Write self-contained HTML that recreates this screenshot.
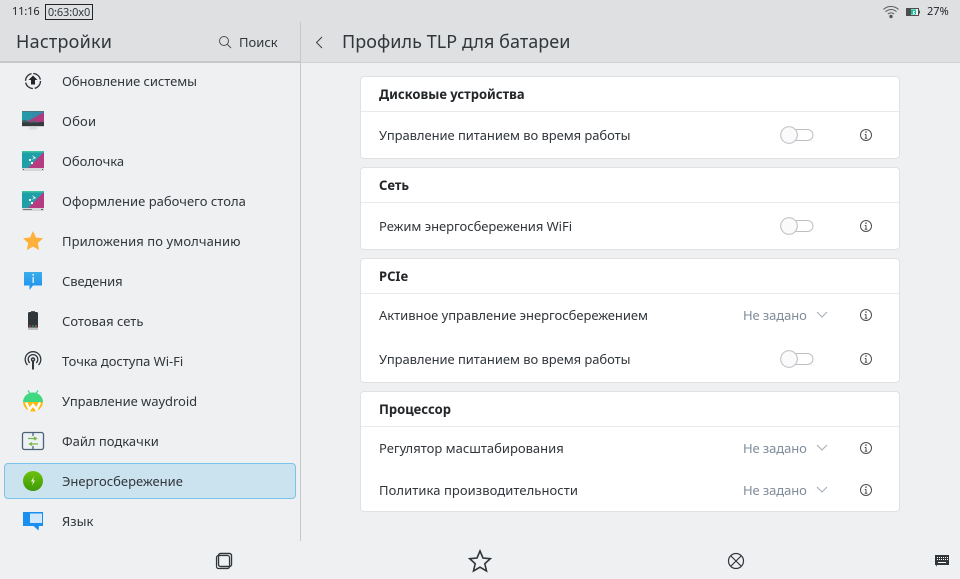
<!DOCTYPE html>
<html lang="ru"><head><meta charset="utf-8"><title>Настройки</title>
<style>
html,body{margin:0;padding:0}
body{width:960px;height:579px;overflow:hidden;position:relative;background:#eff0f2;font-family:"Noto Sans","Noto Sans CJK SC","DejaVu Sans",sans-serif;color:#31363b;font-size:13px}
div,svg,span{position:absolute}
.t{white-space:nowrap;line-height:20px;height:20px}
.side{left:62px;font-size:13px;color:#31363b}
.ic{left:18px;width:30px;height:30px}
.card{left:360px;width:538px;background:#fff;border:1px solid #dfe1e3;border-radius:4px}
.div{left:361px;width:538px;height:1px;background:#e9eaec}
.h{left:379px;font-weight:700;font-size:13px;color:#232629}
.l{left:379px;font-size:13px;color:#31363b}
.nz{left:743px;font-size:13px;color:#7f8c9a;letter-spacing:-.1px}
</style></head><body>
<div style="left:0;top:0;width:960px;height:62px;background:#dee0e2"></div>
<div style="left:0;top:61px;width:300px;height:2px;background:#c6c8cb"></div>
<div style="left:301px;top:62px;width:659px;height:1px;background:#cfd1d3"></div>
<div style="left:300px;top:0;width:1px;height:541px;background:#c6c8cb"></div>
<div style="left:300px;top:0;width:1px;height:22px;background:#dee0e2"></div>

<div class="t" style="left:12px;top:2px;font-size:11px;color:#232629;letter-spacing:-.1px">11:16</div>
<div class="t" style="left:45px;top:4px;width:46px;height:14px;line-height:15px;border:1px solid #232629;font-size:11px;color:#31363b;text-align:center;box-sizing:content-box;letter-spacing:-.1px">0:63:0x0</div>
<svg style="left:882px;top:4px" width="18" height="15" viewBox="0 0 18 15" fill="none" stroke="#5a5a5a" stroke-width="1"><path d="M1.5 5.5C5.5 1.5 12.500 1.500 16.500 5.500"/><path d="M3.500 7.800C6.500 4.800 11.500 4.800 14.500 7.800"/><path d="M5.800 10C7.500 8.500 10.500 8.500 12.200 10"/><circle cx="9" cy="12.500" r="1.200" fill="#4d4d4d"/></svg>
<svg style="left:905px;top:7px" width="16" height="11" viewBox="0 0 16 11"><rect x="1.500" y="1.500" width="12" height="7" fill="#eef0f1" stroke="#4d4d4d"/><rect x="1" y="1" width="5" height="8" fill="#4d4d4d"/><path d="M6 2.500h5v5H6z" fill="#1abc9c"/><path d="M8 4h2v1H9v1h1v1H8z" fill="#dff5ef"/><rect x="14" y="3.500" width="1" height="3" fill="#4d4d4d"/></svg>
<div class="t" style="left:927px;top:2px;font-size:11px;color:#232629">27%</div>

<div class="t" style="left:16px;top:32px;font-size:18px;color:#31363b;letter-spacing:.22px">Настройки</div>
<svg style="left:218px;top:35px" width="14" height="14" viewBox="0 0 14 14" fill="none" stroke="#4d4d4d" stroke-width="1"><circle cx="6" cy="6" r="4.500"/><path d="M9.300 9.300l3.700 3.700"/></svg>
<div class="t" style="left:239px;top:32px;font-size:13px">Поиск</div>
<svg style="left:313px;top:34px" width="12" height="16" viewBox="0 0 12 16" fill="none" stroke="#31363b" stroke-width=".9"><path d="M9 3L3.500 8.500 9 14"/></svg>
<div class="t" style="left:342px;top:32px;font-size:18px;color:#31363b;letter-spacing:.05px">Профиль TLP для батареи</div>

<div style="left:4px;top:463px;width:290px;height:34px;background:#cbe2ef;border:1px solid #7cc3ec;border-radius:4px"></div>

<div class="t side" style="top:71px;letter-spacing:-.05px">Обновление системы</div>
<div class="t side" style="top:111px;letter-spacing:.2px">Обои</div>
<div class="t side" style="top:151px">Оболочка</div>
<div class="t side" style="top:191px;letter-spacing:.02px">Оформление рабочего стола</div>
<div class="t side" style="top:231px;letter-spacing:.09px">Приложения по умолчанию</div>
<div class="t side" style="top:271px;letter-spacing:-.1px">Сведения</div>
<div class="t side" style="top:311px">Сотовая сеть</div>
<div class="t side" style="top:351px;letter-spacing:-.05px">Точка доступа Wi-Fi</div>
<div class="t side" style="top:391px;letter-spacing:-.05px">Управление waydroid</div>
<div class="t side" style="top:431px">Файл подкачки</div>
<div class="t side" style="top:471px">Энергосбережение</div>
<div class="t side" style="top:511px">Язык</div>

<svg class="ic" style="top:66px" viewBox="0 0 30 30"><circle cx="15" cy="15" r="7.500" fill="none" stroke="#31363b" stroke-width="1.300" stroke-dasharray="10 1.800"/><path d="M15 9.500l4.500 4.500h-2.500v4.500h-4v-4.500h-2.500z" fill="#232629"/></svg>

<svg class="ic" style="top:106px" viewBox="0 0 30 30"><defs><linearGradient id="a" x1="0" y1="0" x2="1" y2="0"><stop offset="0" stop-color="#1f9fa8"/><stop offset="1" stop-color="#3f7fa8"/></linearGradient></defs><rect x="4" y="5" width="22" height="15" fill="url(#a)"/><path d="M26 6.500L8 16H26z" fill="#b0397f"/><path d="M4 16h22v4H4z" fill="#343b40"/><path d="M4 14.500l3-.5 6 2.500H4z" fill="#4a5a60"/><path d="M11 16.500l5-2 6 2z" fill="#5a6468"/><rect x="4" y="5" width="22" height="1" fill="#4a7a80"/><rect x="4" y="20" width="22" height="1" fill="#cdd0d3"/><rect x="11" y="21" width="8" height="2.500" fill="#dadde0"/></svg>

<svg class="ic" style="top:146px" viewBox="0 0 30 30"><rect x="4" y="5" width="22" height="17" fill="#1f9fa8"/><path d="M26 6L10 22h16z" fill="#b83a80"/><rect x="4" y="5" width="22" height="1.500" fill="#3cc0a0"/><path d="M14 9l4 3-5 2 3-2zM11 13h2v2h-2zM13 16h2v2h-2z" fill="#fff"/><rect x="4" y="22" width="22" height="3" fill="#d5d8da"/><rect x="5" y="23" width="1" height="1" fill="#555"/><rect x="24" y="23" width="1" height="1" fill="#555"/></svg>

<svg class="ic" style="top:186px" viewBox="0 0 30 30"><rect x="4" y="5" width="22" height="17" fill="#1f9fa8"/><path d="M26 6L10 22h16z" fill="#b83a80"/><rect x="4" y="5" width="22" height="1.500" fill="#3cc0a0"/><path d="M14 9l4 3-5 2 3-2zM11 13h2v2h-2zM13 16h2v2h-2z" fill="#fff"/><rect x="4" y="22" width="22" height="3" fill="#d5d8da"/><rect x="5" y="23" width="9" height="1" fill="#777"/><rect x="23" y="23" width="2" height="1" fill="#555"/></svg>

<svg class="ic" style="top:226px" viewBox="0 0 30 30"><path d="M15 5l3 6.500 7 .8-5.200 4.800 1.400 7-6.200-3.500-6.200 3.500 1.400-7L5 12.300l7-.8z" fill="#fdb13b"/></svg>

<svg class="ic" style="top:266px" viewBox="0 0 30 30"><defs><linearGradient id="b" x1="0" y1="0" x2="0" y2="1"><stop offset="0" stop-color="#3daee9"/><stop offset="1" stop-color="#1a8ff0"/></linearGradient></defs><path d="M6 6h18v13.500h-9l-3.500 4.500v-4.500H6z" fill="url(#b)"/><rect x="14.500" y="8" width="1.500" height="1.500" fill="#fff"/><rect x="14.500" y="11" width="1.500" height="6" fill="#cdeafa"/></svg>

<svg class="ic" style="top:306px" viewBox="0 0 30 30"><rect x="10" y="6" width="10" height="18" rx="1.500" fill="#31363b"/><rect x="10" y="21.500" width="10" height="2.500" fill="#bdc1c4"/><rect x="11" y="19.500" width="2" height="1" fill="#da4453"/><rect x="14" y="19.500" width="2" height="1" fill="#27ae60"/><rect x="17" y="19.500" width="2" height="1" fill="#f47750"/><rect x="13" y="5" width="4" height="1" fill="#555"/></svg>

<svg class="ic" style="top:346px" viewBox="0 0 30 30" fill="none" stroke="#31363b" stroke-width="1.300"><path d="M9.500 19A7.800 7.800 0 1 1 20.500 19"/><path d="M11.800 17A4.800 4.800 0 1 1 18.200 17"/><circle cx="15" cy="13.500" r="1.500" stroke-width="1.500"/><path d="M15 15v8.500" stroke-width="2"/></svg>

<svg class="ic" style="top:386px" viewBox="0 0 30 30"><path d="M5 15.500a10 10 0 0 0 20 0z" fill="#fdb90f"/><path d="M5 16a10 9.500 0 0 1 20 0z" fill="#3fd880"/><path d="M10 4.500l2 3M20 4.500l-2 3" stroke="#3fd880" stroke-width="1.300"/><path d="M8 16.500l3.500 7 3.500-4.500 3.500 4.500 3.500-7" fill="none" stroke="#fff" stroke-width="2.500"/></svg>

<svg class="ic" style="top:426px" viewBox="0 0 30 30"><rect x="4.500" y="6.500" width="21" height="17" rx="2" fill="#eef1f3" stroke="#4a6178" stroke-width="1.300"/><path d="M15 6v4M15 20v4" stroke="#4a6178" stroke-width="1.300"/><path d="M10 12.500h8M16 11l2.500 1.500-2.500 1.500" fill="none" stroke="#7ab648" stroke-width="1.200"/><path d="M20 18h-8M14 16.500l-2.500 1.500 2.500 1.500" fill="none" stroke="#7ab648" stroke-width="1.200"/></svg>

<svg class="ic" style="top:466px" viewBox="0 0 30 30"><defs><linearGradient id="c" x1="0" y1="0" x2="0" y2="1"><stop offset="0" stop-color="#6cc20c"/><stop offset="1" stop-color="#3e9a08"/></linearGradient></defs><circle cx="15" cy="15" r="10" fill="url(#c)"/><path d="M16 10.500l-3 5h2l-1 4 3-5h-2z" fill="#f2fae6"/></svg>

<svg class="ic" style="top:506px" viewBox="0 0 30 30"><path d="M5 6h20v14h-4l-.5 4.500-5-4.500H5z" fill="#1a8ff0"/><rect x="12" y="7.500" width="12" height="9.500" fill="#cfe8fb"/></svg>

<div class="card" style="top:76px;height:81px"></div><div class="div" style="top:111px"></div>
<div class="card" style="top:167px;height:81px"></div><div class="div" style="top:202px"></div>
<div class="card" style="top:258px;height:123px"></div><div class="div" style="top:293px"></div>
<div class="card" style="top:391px;height:119px"></div><div class="div" style="top:426px"></div>

<div class="t h" style="top:84px">Дисковые устройства</div>
<div class="t l" style="top:125px;letter-spacing:-.06px">Управление питанием во время работы</div>
<div class="t h" style="top:175px">Сеть</div>
<div class="t l" style="top:216px;letter-spacing:-.04px">Режим энергосбережения WiFi</div>
<div class="t h" style="top:266px">PCIe</div>
<div class="t l" style="top:305px;letter-spacing:-.03px">Активное управление энергосбережением</div>
<div class="t l" style="top:349px;letter-spacing:-.06px">Управление питанием во время работы</div>
<div class="t h" style="top:399px">Процессор</div>
<div class="t l" style="top:438px">Регулятор масштабирования</div>
<div class="t l" style="top:480px;letter-spacing:.07px">Политика производительности</div>

<div class="t nz" style="top:305px">Не задано</div>
<div class="t nz" style="top:438px">Не задано</div>
<div class="t nz" style="top:480px">Не задано</div>
<svg style="left:816px;top:311px" width="13" height="8" viewBox="0 0 13 8" fill="none" stroke="#a3acb5"><path d="M1 1l5 5 5-5"/></svg>
<svg style="left:816px;top:444px" width="13" height="8" viewBox="0 0 13 8" fill="none" stroke="#a3acb5"><path d="M1 1l5 5 5-5"/></svg>
<svg style="left:816px;top:486px" width="13" height="8" viewBox="0 0 13 8" fill="none" stroke="#a3acb5"><path d="M1 1l5 5 5-5"/></svg>

<svg style="left:780px;top:125px" width="34" height="20" viewBox="0 0 34 20"><rect x="10.500" y="4.500" width="22.500" height="11" rx="5.500" fill="#fff" stroke="#bcc0c4"/><circle cx="9" cy="10" r="8.300" fill="#fafafb" stroke="#c3c6c9" stroke-width="1.200"/></svg>
<svg style="left:780px;top:216px" width="34" height="20" viewBox="0 0 34 20"><rect x="10.500" y="4.500" width="22.500" height="11" rx="5.500" fill="#fff" stroke="#bcc0c4"/><circle cx="9" cy="10" r="8.300" fill="#fafafb" stroke="#c3c6c9" stroke-width="1.200"/></svg>
<svg style="left:780px;top:349px" width="34" height="20" viewBox="0 0 34 20"><rect x="10.500" y="4.500" width="22.500" height="11" rx="5.500" fill="#fff" stroke="#bcc0c4"/><circle cx="9" cy="10" r="8.300" fill="#fafafb" stroke="#c3c6c9" stroke-width="1.200"/></svg>

<svg style="left:859px;top:128px" width="14" height="14" viewBox="0 0 14 14" fill="none" stroke="#4d4d4d"><circle cx="7" cy="7" r="5.500"/><path d="M7 6.300v3.700M5.700 6.500H7M5.700 10.300h2.600"/><rect x="6.300" y="3.400" width="1.400" height="1.400" fill="#4d4d4d" stroke="none"/></svg>
<svg style="left:859px;top:219px" width="14" height="14" viewBox="0 0 14 14" fill="none" stroke="#4d4d4d"><circle cx="7" cy="7" r="5.500"/><path d="M7 6.300v3.700M5.700 6.500H7M5.700 10.300h2.600"/><rect x="6.300" y="3.400" width="1.400" height="1.400" fill="#4d4d4d" stroke="none"/></svg>
<svg style="left:859px;top:308px" width="14" height="14" viewBox="0 0 14 14" fill="none" stroke="#4d4d4d"><circle cx="7" cy="7" r="5.500"/><path d="M7 6.300v3.700M5.700 6.500H7M5.700 10.300h2.600"/><rect x="6.300" y="3.400" width="1.400" height="1.400" fill="#4d4d4d" stroke="none"/></svg>
<svg style="left:859px;top:352px" width="14" height="14" viewBox="0 0 14 14" fill="none" stroke="#4d4d4d"><circle cx="7" cy="7" r="5.500"/><path d="M7 6.300v3.700M5.700 6.500H7M5.700 10.300h2.600"/><rect x="6.300" y="3.400" width="1.400" height="1.400" fill="#4d4d4d" stroke="none"/></svg>
<svg style="left:859px;top:441px" width="14" height="14" viewBox="0 0 14 14" fill="none" stroke="#4d4d4d"><circle cx="7" cy="7" r="5.500"/><path d="M7 6.300v3.700M5.700 6.500H7M5.700 10.300h2.600"/><rect x="6.300" y="3.400" width="1.400" height="1.400" fill="#4d4d4d" stroke="none"/></svg>
<svg style="left:859px;top:483px" width="14" height="14" viewBox="0 0 14 14" fill="none" stroke="#4d4d4d"><circle cx="7" cy="7" r="5.500"/><path d="M7 6.300v3.700M5.700 6.500H7M5.700 10.300h2.600"/><rect x="6.300" y="3.400" width="1.400" height="1.400" fill="#4d4d4d" stroke="none"/></svg>

<svg style="left:215px;top:552px" width="18" height="18" viewBox="0 0 18 18" fill="none" stroke="#31363b"><rect x="1.500" y="3.500" width="13" height="13" rx="2" stroke-width="1.200"/><rect x="3.500" y="1.500" width="13" height="13" rx="2" stroke-width="1.400"/></svg>
<svg style="left:468px;top:549px" width="24" height="24" viewBox="0 0 24 24" fill="none" stroke="#31363b" stroke-width="1.600"><path d="M12 2l3 7 7.300.7-5.500 5 1.700 7.300-6.500-3.800L5.500 22l1.700-7.300-5.500-5L9 9z"/></svg>
<svg style="left:727px;top:552px" width="18" height="18" viewBox="0 0 18 18" fill="none" stroke="#31363b" stroke-width="1.200"><circle cx="9" cy="9" r="7.500"/><path d="M4 4l10 10M14 4L4 14"/></svg>
<svg style="left:934px;top:554px" width="16" height="15" viewBox="0 0 16 15"><path d="M1 1h14v10H3v2l-1-2H1z" fill="#31363b"/><path d="M3 3h1v1H3zM5 3h1v1H5zM7 3h1v1H7zM9 3h1v1H9zM11 3h1v1h-1zM13 3h1v1h-1zM3 5h1v1H3zM5 5h1v1H5zM7 5h1v1H7zM9 5h1v1H9zM11 5h1v1h-1zM13 5h1v1h-1zM4 8h8v1H4z" fill="#fff"/></svg>
</body></html>
